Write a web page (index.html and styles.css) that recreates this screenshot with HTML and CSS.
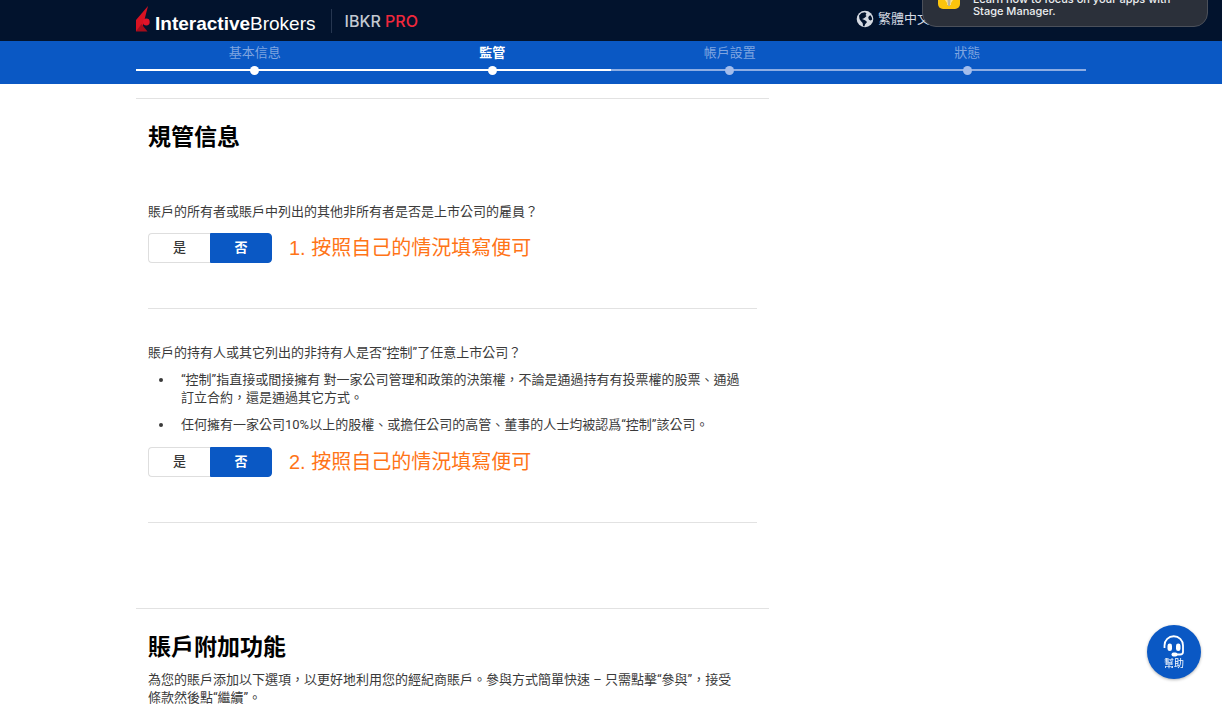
FILE: index.html
```html
<!DOCTYPE html>
<html lang="zh-Hant">
<head>
<meta charset="utf-8">
<meta name="viewport" content="width=device-width, initial-scale=1">
<title>Interactive Brokers</title>
<link rel="stylesheet" href="styles.css">
</head>
<body>
<header class="topbar">
  <div class="container topbar-inner">
    <a class="logo" href="#">
      <svg class="logo-mark" viewBox="0 0 14 26" aria-hidden="true">
        <path d="M12 0 0 14v11.500l7-6z" fill="#d81222"/>
        <path d="M0 25.500h11.500L5.500 18z" fill="#a30d1c"/>
        <circle cx="10.300" cy="16" r="3.400" fill="#e0142a"/>
      </svg>
      <span class="logo-text"><strong>Interactive</strong>Brokers</span>
    </a>
    <span class="product">IBKR <span class="product-pro">PRO</span></span>
    <button class="language" type="button">
      <svg class="globe" viewBox="0 0 18 18" aria-hidden="true">
        <circle cx="9" cy="9" r="8.300" fill="#d5dae2"/>
        <path d="M3 5.500 5.500 3 9 2.200l1.500 1.300-1 1.500 1 1-1.500 1.500-1.500 1L6 9l2.500 1 2 1.200.3 1.300-1.500 1.500-1 2.500-1.200-.5-.5-3-1.800-2L3.500 9zM13 6l1.500-.8 1.300 2.300.4 2-1.500 1-1.700-.8-.8-2z" fill="#02132d"/>
      </svg>
      <span>繁體中文</span>
    </button>
  </div>
</header>

<nav class="progress" aria-label="申請進度">
  <ol class="container steps">
    <li class="step done">基本信息</li>
    <li class="step done current" aria-current="step">監管</li>
    <li class="step">帳戶設置</li>
    <li class="step">狀態</li>
  </ol>
</nav>

<main class="container layout">
  <div class="column">
    <section class="panel">
      <h1 class="title">規管信息</h1>
      <div class="question first">
        <p class="text" id="q1">賬戶的所有者或賬戶中列出的其他非所有者是否是上市公司的雇員？</p>
        <div class="answer">
          <div class="toggle" role="group" aria-labelledby="q1">
            <button class="choice" type="button" aria-pressed="false">是</button>
            <button class="choice selected" type="button" aria-pressed="true">否</button>
          </div>
          <span class="note">1. 按照自己的情況填寫便可</span>
        </div>
      </div>
      <div class="question">
        <p class="text" id="q2">賬戶的持有人或其它列出的非持有人是否“控制”了任意上市公司？</p>
        <ul class="details">
          <li>“控制”指直接或間接擁有 對一家公司管理和政策的決策權，不論是通過持有有投票權的股票、通過訂立合約，還是通過其它方式。</li>
          <li>任何擁有一家公司10%以上的股權、或擔任公司的高管、董事的人士均被認爲“控制”該公司。</li>
        </ul>
        <div class="answer">
          <div class="toggle" role="group" aria-labelledby="q2">
            <button class="choice" type="button" aria-pressed="false">是</button>
            <button class="choice selected" type="button" aria-pressed="true">否</button>
          </div>
          <span class="note">2. 按照自己的情況填寫便可</span>
        </div>
      </div>
    </section>
    <section class="panel">
      <h2 class="title">賬戶附加功能</h2>
      <p class="text intro">為您的賬戶添加以下選項，以更好地利用您的經紀商賬戶。參與方式簡單快速 – 只需點擊“參與”，接受條款然後點“繼續”。</p>
    </section>
  </div>
</main>

<button class="help" type="button">
  <svg class="headset" viewBox="0 0 22 22" aria-hidden="true">
    <path d="M1.500 13V10.500a9 9 0 0 1 18.500 0V17q0 2.500-3 2.500h-5" fill="none" stroke="#fff" stroke-width="1.800"/>
    <rect x="4.500" y="8.500" width="4.500" height="7.500" rx="2.200" fill="#fff"/>
    <rect x="13" y="8.500" width="4.500" height="7.500" rx="2.200" fill="#fff"/>
    <rect x="8.500" y="17.500" width="6" height="4" rx="2" fill="#fff"/>
  </svg>
  <span>幫助</span>
</button>

<aside class="notification">
  <svg class="tips" viewBox="0 0 22 22" aria-hidden="true">
    <rect width="22" height="22" rx="5" fill="#fcc40d"/>
    <path d="M7 6h8v7l-2 3v2H9v-2l-2-3z" fill="#ffe58a"/>
    <path d="M9.500 13h3l-.5 6h-2z" fill="#b9b3a0"/>
  </svg>
  <p class="notification-text">Learn how to focus on your apps with Stage Manager.</p>
</aside>
</body>
</html>
```
FILE: styles.css
```css
* { box-sizing: border-box; }

body {
  margin: 0;
  background: #fff;
  color: #3a3a3a;
  font: 13px/18px Roboto, "Noto Sans CJK TC", sans-serif;
}

button {
  font: inherit;
  cursor: pointer;
}

h1, h2, p, ul, ol { margin: 0; padding: 0; }

.container {
  width: 100%;
  max-width: 950px;
  margin: 0 auto;
}

.topbar {
  background: #02132d;
  height: 41px;
}

.topbar-inner {
  display: flex;
  align-items: center;
  height: 100%;
}

.logo {
  display: flex;
  align-items: flex-end;
  gap: 5px;
  padding: 0 15px 3px 0;
  color: #fff;
  text-decoration: none;
}

.logo-mark { width: 14px; height: 26px; }

.logo-text { font: 19px/16px "Liberation Sans", Arial, sans-serif; }

.product {
  border-left: 1px solid #263650;
  padding-left: 13px;
  color: #c3c8d1;
  font: 500 16px/24px Inter, sans-serif;
}

.product-pro { color: #f0283c; }

.language {
  display: flex;
  align-items: center;
  gap: 4px;
  margin-left: auto;
  margin-right: 156px;
  padding: 0 0 4px;
  border: 0;
  background: none;
  color: #d5dae2;
  white-space: nowrap;
}

.globe { width: 18px; height: 18px; }

.progress {
  background: #0a58c4;
  height: 43px;
}

.steps {
  display: grid;
  grid-template-columns: repeat(4, 1fr);
  list-style: none;
}

.step {
  display: flex;
  flex-direction: column;
  align-items: center;
  padding-top: 3px;
  color: #7fa5e0;
  background: linear-gradient(#8dade3, #8dade3) 0 28px / 100% 2px no-repeat;
}

.step::after {
  content: "";
  width: 9px;
  height: 9px;
  margin-top: 4px;
  border-radius: 50%;
  background: #a3bdec;
}

.step.done { background-image: linear-gradient(#fff, #fff); }
.step.done::after { background: #fff; }
.step.current { color: #fff; font-weight: 700; }

.layout {
  display: grid;
  grid-template-columns: 2fr 1fr;
  padding-top: 14px;
}

.panel {
  border-top: 1px solid #e2e2e2;
  padding: 20px 12px 0;
}

.panel + .panel { margin-top: 85px; }

.title {
  color: #000;
  font-size: 23px;
  font-weight: 700;
  line-height: 38px;
}

.question {
  border-bottom: 1px solid #e2e2e2;
  padding: 35px 0 45px;
}

.question.first { padding-top: 46px; }

.details {
  margin-top: 9px;
  padding-right: 12px;
  list-style: none;
}

.details li {
  display: grid;
  grid-template-columns: 4px 1fr;
  gap: 18px;
  padding-left: 11px;
  margin-bottom: 9px;
}

.details li::before {
  content: "";
  width: 4px;
  height: 4px;
  margin-top: 7px;
  border-radius: 50%;
  background: #3a3a3a;
}

.answer {
  display: flex;
  align-items: center;
  gap: 17px;
  margin-top: 12px;
}

.details + .answer { margin-top: 13px; }

.toggle {
  display: grid;
  grid-template-columns: 1fr 1fr;
  width: 124px;
  height: 30px;
}

.choice {
  padding: 0;
  border: 1px solid #dedede;
  border-right: 0;
  border-radius: 4px 0 0 4px;
  background: #fff;
  color: #333;
  font-weight: 500;
}

.choice.selected {
  border: 1px solid #0a58c4;
  border-radius: 0 4px 4px 0;
  background: #0a58c4;
  color: #fff;
  font-weight: 700;
}

.note {
  color: #ff7417;
  font: 20px/28px "Liberation Sans", "Noto Sans CJK TC", sans-serif;
}

.intro { margin-top: 4px; padding-right: 16px; }

.help {
  position: fixed;
  right: 21px;
  bottom: 41px;
  display: flex;
  flex-direction: column;
  align-items: center;
  width: 54px;
  height: 54px;
  padding: 10px 0 0;
  border: 0;
  border-radius: 50%;
  background: #0a58c4;
  box-shadow: 0 1px 3px rgba(0, 0, 0, 0.3);
  color: #fff;
  font-size: 10px;
  line-height: 14px;
}

.headset { width: 22px; height: 22px; }

.notification {
  position: fixed;
  top: -40px;
  right: 14px;
  display: flex;
  align-items: flex-end;
  gap: 13px;
  width: 286px;
  height: 67px;
  padding: 0 20px 9px 15px;
  border: 1px solid #4b505a;
  border-radius: 14px;
  background: #2b303a;
  color: #eceef0;
}

.tips { flex: none; width: 22px; height: 22px; margin-bottom: 8px; }

.notification-text {
  font: 500 11px/12px Inter, sans-serif;
}
```
